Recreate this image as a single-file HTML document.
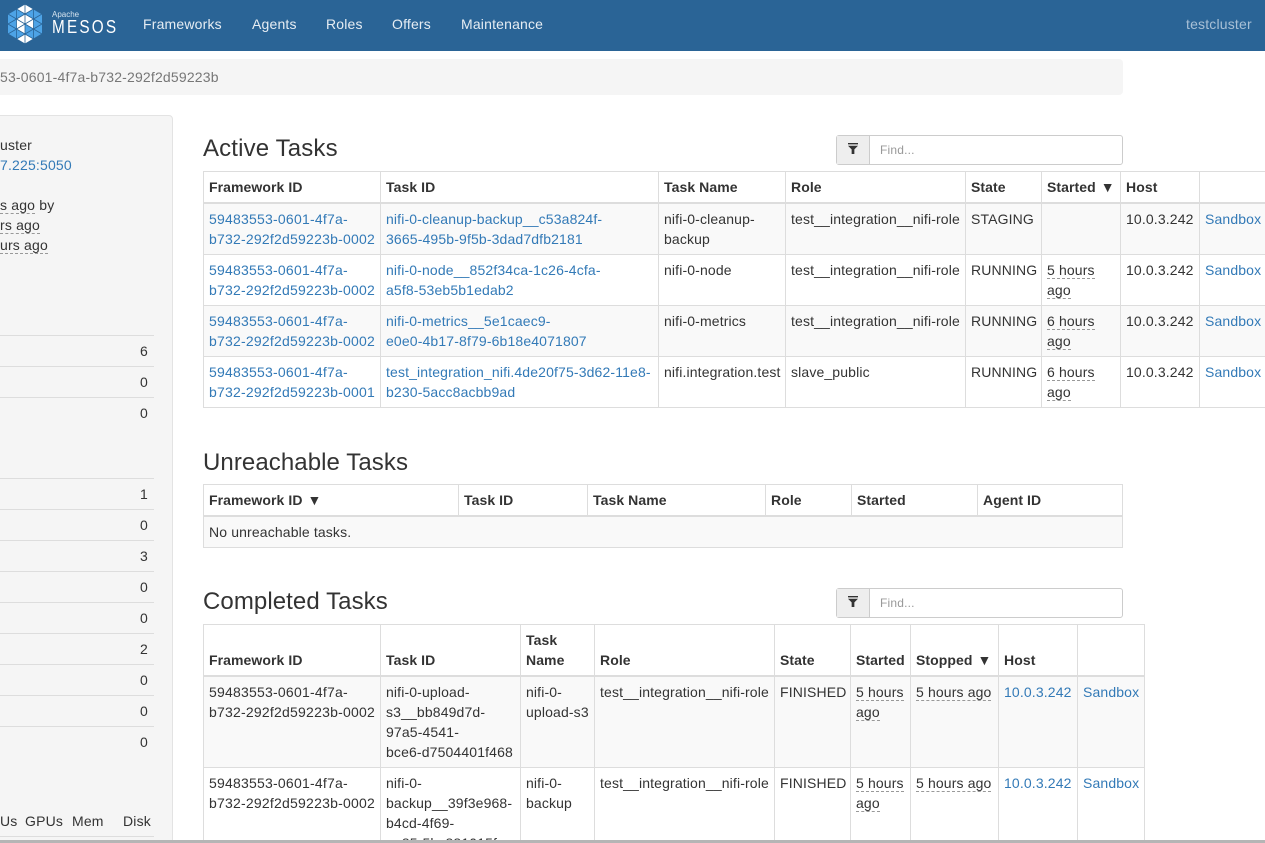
<!DOCTYPE html>
<html><head><meta charset="utf-8"><style>
*{box-sizing:border-box}
html,body{margin:0;padding:0;width:1265px;height:843px;overflow:hidden;background:#fff}
#root{position:absolute;left:0;top:0;width:1265px;height:843px;overflow:hidden;background:#fff;font-family:"Liberation Sans",sans-serif;font-size:14px;line-height:20px;color:#333;letter-spacing:.18px}
.abs{position:absolute}
a{color:#337ab7;text-decoration:none}
#nav{left:0;top:0;width:1265px;height:51px;background:#2a6496}
#nav span{position:absolute;top:14px;color:#e6edf3;white-space:nowrap}
#bc{left:-20px;top:59px;width:1143px;height:36px;background:#f5f5f5;border-radius:4px;color:#777}
#side{left:-20px;top:115px;width:193px;height:740px;background:#f5f5f5;border:1px solid #e3e3e3;border-radius:4px}
.t{position:absolute;white-space:nowrap}
.ln{position:absolute;left:0;width:154px;height:1px;background:#ddd}
.n{position:absolute;left:100px;width:48px;text-align:right}
u{text-decoration:none;border-bottom:1px dashed #999}
h3{position:absolute;margin:0;font-size:24px;font-weight:500;line-height:26px;left:203px;color:#333;letter-spacing:.08px}
table{position:absolute;border-collapse:collapse;table-layout:fixed}
th,td{border:1px solid #ddd;padding:5px;vertical-align:top;text-align:left;overflow:hidden;white-space:nowrap;letter-spacing:.14px}
td:first-child{letter-spacing:.22px}
th{border-bottom:2px solid #ddd;vertical-align:bottom;font-weight:bold;letter-spacing:.08px}
th em{font-style:normal;margin-left:1px}
tr.o td{background:#f9f9f9}
.fb{position:absolute;left:836px;width:287px;height:30px;border:1px solid #ccc;border-radius:3px;background:#fff;font-size:12px;color:#999}
.fb i{position:absolute;left:0;top:0;width:33px;height:28px;background:#eee;border-right:1px solid #ccc}
.fb svg{position:absolute;left:11px;top:7px}
.fb b{position:absolute;left:43px;top:4px;font-weight:normal}
#bot{left:0;top:840px;width:1265px;height:3px;background:#b5b5b5}
</style></head><body><div id="root">
<div class="abs" id="nav">
<svg class="abs" style="left:7px;top:4px" width="36" height="40" viewBox="0 0 36 40">
<path d="M18 0L35 10V30L18 40L1 30V10Z" fill="#4da3e6"/>
<path d="M18 0L26.500 5L18 10L9.500 5Z M9.500 15L18 10L26.500 15L26.500 25L18 20L18 30L9.500 25Z M9.500 35L18 30L26.500 35L18 40Z" fill="#fff"/>
<path d="M1 10L35 30M1 20L26.500 35M1 30L18 40M9.500 5L35 20M18 0L35 10M35 10L1 30M35 20L9.500 35M35 30L18 40M26.500 5L1 20M18 0L1 10M18 0V40M9.500 5V35M26.500 5V35" stroke="#2a6496" stroke-width=".8" fill="none"/>
</svg>
<div class="t" style="left:52px;top:10px;font-size:8px;line-height:10px;color:#d5e3ee;letter-spacing:0">Apache</div>
<div class="t" style="left:52px;top:16px;font-size:18px;line-height:22px;letter-spacing:2.600px;color:#fff;transform:scaleX(.85);transform-origin:0 0">MESOS</div>
<span style="left:143px">Frameworks</span><span style="left:252px">Agents</span><span style="left:326px">Roles</span><span style="left:392px">Offers</span><span style="left:461px">Maintenance</span>
<span style="left:1186px;color:#a8c0d6">testcluster</span>
</div>
<div class="abs" id="bc"><span class="t" style="left:20px;top:8px">53-0601-4f7a-b732-292f2d59223b</span></div>
<div class="abs" id="side"></div>
<div class="t" style="left:0;top:135px">uster</div>
<a class="t" style="left:0;top:155px">7.225:5050</a>
<div class="t" style="left:0;top:195px"><u>s ago</u> by</div>
<div class="t" style="left:0;top:215px"><u>rs ago</u></div>
<div class="t" style="left:0;top:235px"><u>urs ago</u></div>
<div class="ln" style="top:335px"></div><div class="n" style="top:341px">6</div>
<div class="ln" style="top:366px"></div><div class="n" style="top:372px">0</div>
<div class="ln" style="top:397px"></div><div class="n" style="top:403px">0</div>
<div class="ln" style="top:478px"></div><div class="n" style="top:484px">1</div>
<div class="ln" style="top:509px"></div><div class="n" style="top:515px">0</div>
<div class="ln" style="top:540px"></div><div class="n" style="top:546px">3</div>
<div class="ln" style="top:571px"></div><div class="n" style="top:577px">0</div>
<div class="ln" style="top:602px"></div><div class="n" style="top:608px">0</div>
<div class="ln" style="top:633px"></div><div class="n" style="top:639px">2</div>
<div class="ln" style="top:664px"></div><div class="n" style="top:670px">0</div>
<div class="ln" style="top:695px"></div><div class="n" style="top:701px">0</div>
<div class="ln" style="top:726px"></div><div class="n" style="top:732px">0</div>
<div class="t" style="left:0;top:811px">Us</div><div class="t" style="left:25px;top:811px">GPUs</div><div class="t" style="left:72px;top:811px">Mem</div><div class="t" style="left:123px;top:811px">Disk</div>
<div class="ln" style="top:836px"></div>

<h3 style="top:136px;letter-spacing:.15px">Active Tasks</h3>
<div class="fb" style="top:135px"><i><svg width="10" height="11" viewBox="0 0 11 12"><path d="M0 0H11V1.500H0Z M0 3H11L7 7V12H4V7Z" fill="#333"/></svg></i><b>Find...</b></div>
<table style="left:203px;top:171px;width:1063px">
<colgroup><col style="width:177px"><col style="width:278px"><col style="width:127px"><col style="width:180px"><col style="width:76px"><col style="width:79px"><col style="width:79px"><col style="width:67px"></colgroup>
<tr><th>Framework ID</th><th>Task ID</th><th>Task Name</th><th>Role</th><th>State</th><th>Started <em>▼</em></th><th>Host</th><th></th></tr>
<tr class="o"><td><a>59483553-0601-4f7a-<br>b732-292f2d59223b-0002</a></td><td><a>nifi-0-cleanup-backup__c53a824f-<br>3665-495b-9f5b-3dad7dfb2181</a></td><td>nifi-0-cleanup-<br>backup</td><td>test__integration__nifi-role</td><td>STAGING</td><td></td><td>10.0.3.242</td><td><a>Sandbox</a></td></tr>
<tr><td><a>59483553-0601-4f7a-<br>b732-292f2d59223b-0002</a></td><td><a>nifi-0-node__852f34ca-1c26-4cfa-<br>a5f8-53eb5b1edab2</a></td><td>nifi-0-node</td><td>test__integration__nifi-role</td><td>RUNNING</td><td><u>5 hours</u><br><u>ago</u></td><td>10.0.3.242</td><td><a>Sandbox</a></td></tr>
<tr class="o"><td><a>59483553-0601-4f7a-<br>b732-292f2d59223b-0002</a></td><td><a>nifi-0-metrics__5e1caec9-<br>e0e0-4b17-8f79-6b18e4071807</a></td><td>nifi-0-metrics</td><td>test__integration__nifi-role</td><td>RUNNING</td><td><u>6 hours</u><br><u>ago</u></td><td>10.0.3.242</td><td><a>Sandbox</a></td></tr>
<tr><td><a>59483553-0601-4f7a-<br>b732-292f2d59223b-0001</a></td><td><a>test_integration_nifi.4de20f75-3d62-11e8-<br>b230-5acc8acbb9ad</a></td><td>nifi.integration.test</td><td>slave_public</td><td>RUNNING</td><td><u>6 hours</u><br><u>ago</u></td><td>10.0.3.242</td><td><a>Sandbox</a></td></tr>
</table>

<h3 style="top:450px">Unreachable Tasks</h3>
<table style="left:203px;top:484px;width:919px">
<colgroup><col style="width:255px"><col style="width:129px"><col style="width:178px"><col style="width:86px"><col style="width:126px"><col style="width:145px"></colgroup>
<tr><th>Framework ID <em>▼</em></th><th>Task ID</th><th>Task Name</th><th>Role</th><th>Started</th><th>Agent ID</th></tr>
<tr class="o"><td colspan="6" style="letter-spacing:.14px">No unreachable tasks.</td></tr>
</table>

<h3 style="top:589px">Completed Tasks</h3>
<div class="fb" style="top:588px"><i><svg width="10" height="11" viewBox="0 0 11 12"><path d="M0 0H11V1.500H0Z M0 3H11L7 7V12H4V7Z" fill="#333"/></svg></i><b>Find...</b></div>
<table style="left:203px;top:624px;width:941px">
<colgroup><col style="width:177px"><col style="width:140px"><col style="width:74px"><col style="width:180px"><col style="width:76px"><col style="width:60px"><col style="width:88px"><col style="width:79px"><col style="width:67px"></colgroup>
<tr><th>Framework ID</th><th>Task ID</th><th>Task<br>Name</th><th>Role</th><th>State</th><th>Started</th><th>Stopped <em>▼</em></th><th>Host</th><th></th></tr>
<tr class="o"><td>59483553-0601-4f7a-<br>b732-292f2d59223b-0002</td><td>nifi-0-upload-<br>s3__bb849d7d-<br>97a5-4541-<br>bce6-d7504401f468</td><td>nifi-0-<br>upload-s3</td><td>test__integration__nifi-role</td><td>FINISHED</td><td><u>5 hours</u><br><u>ago</u></td><td><u>5 hours ago</u></td><td><a>10.0.3.242</a></td><td><a>Sandbox</a></td></tr>
<tr><td>59483553-0601-4f7a-<br>b732-292f2d59223b-0002</td><td>nifi-0-<br>backup__39f3e968-<br>b4cd-4f69-<br>aa85-5bc881015f</td><td>nifi-0-<br>backup</td><td>test__integration__nifi-role</td><td>FINISHED</td><td><u>5 hours</u><br><u>ago</u></td><td><u>5 hours ago</u></td><td><a>10.0.3.242</a></td><td><a>Sandbox</a></td></tr>
</table>
<div class="abs" id="bot"></div>
</div></body></html>
